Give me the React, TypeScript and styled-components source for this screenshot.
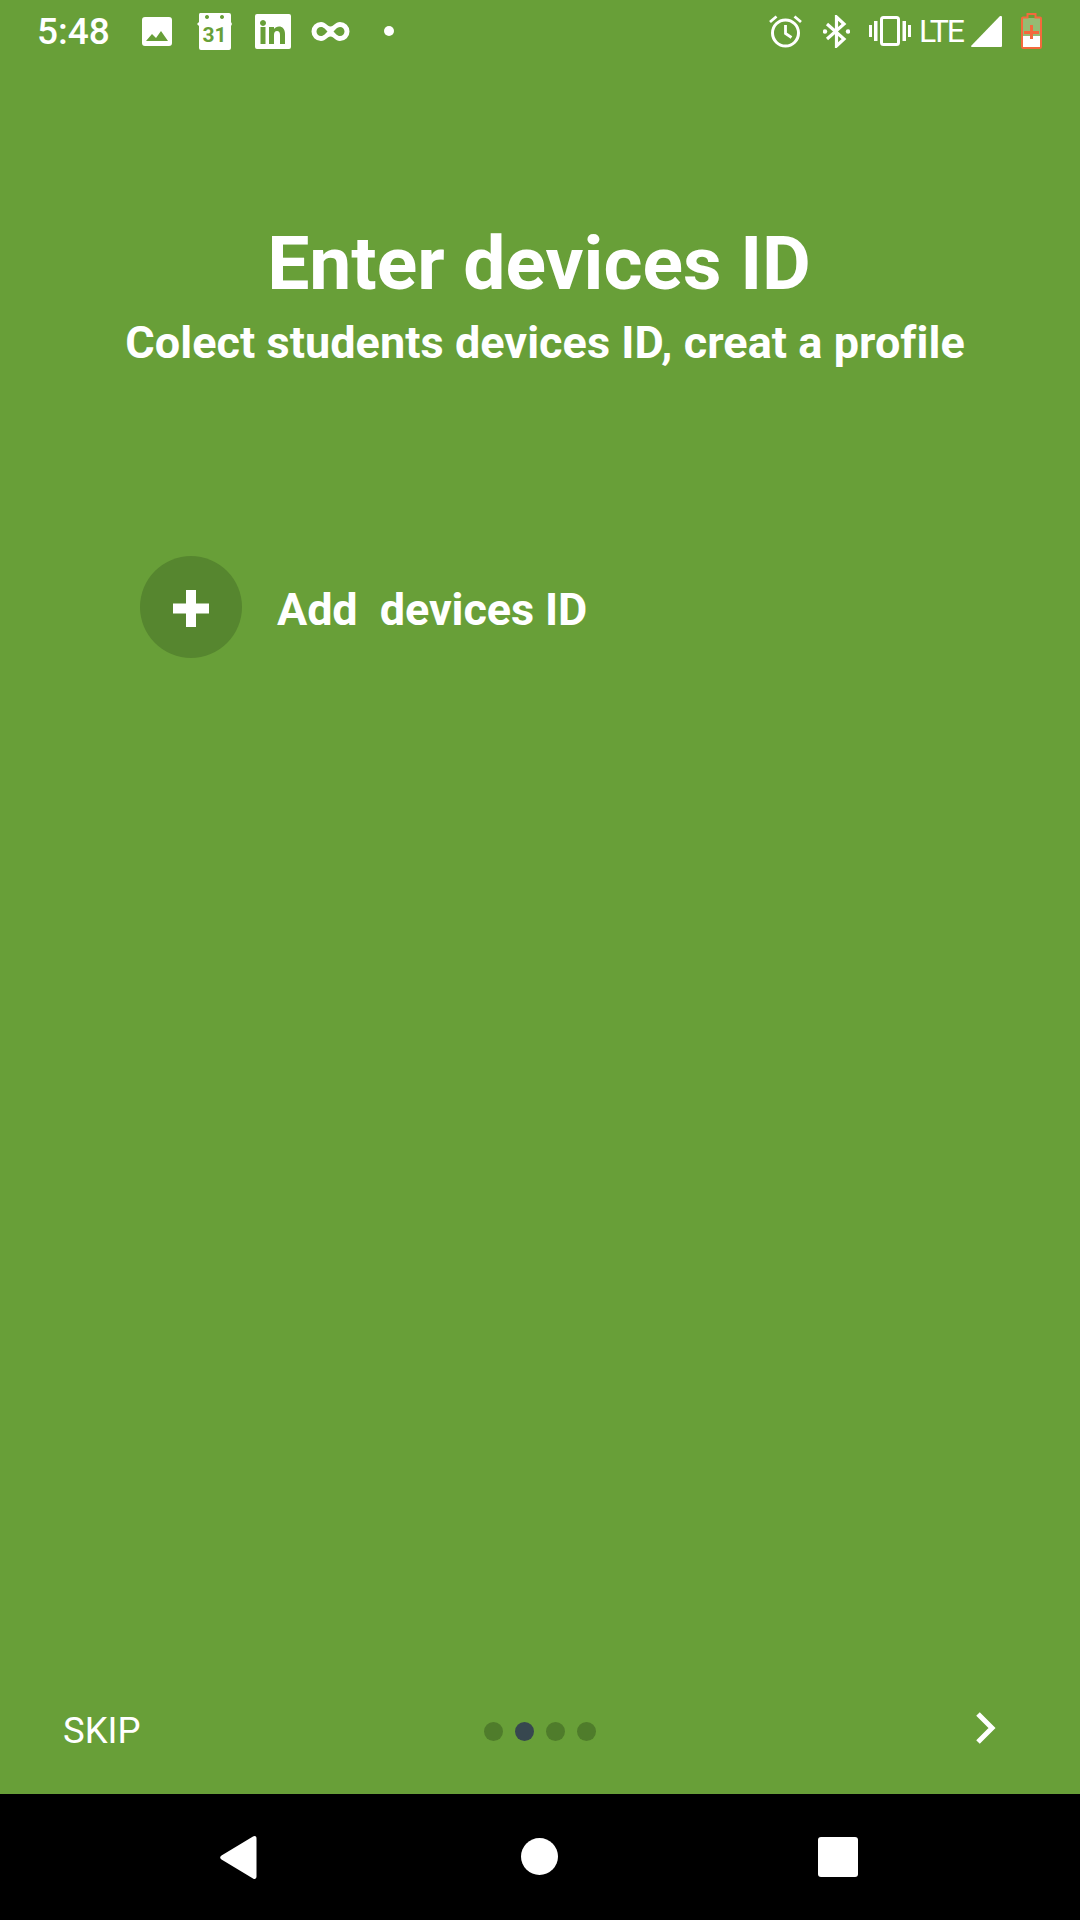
import React from "react";
import styled, { createGlobalStyle } from "styled-components";

const GlobalStyle = createGlobalStyle`
  html, body {
    margin: 0;
    padding: 0;
    background: #000;
  }
`;

const Screen = styled.div`
  width: 1080px;
  height: 1920px;
  display: flex;
  flex-direction: column;
  overflow: hidden;
  background: #689f38;
  color: #fff;
  font-family: Roboto, "Liberation Sans", sans-serif;
`;

const StatusBar = styled.div`
  height: 63px;
  flex: none;
  display: flex;
  align-items: flex-start;
`;

const Clock = styled.div`
  margin: 12px 0 0 37px;
  width: 71px;
  font-size: 37px;
  line-height: 40px;
  font-weight: 500;
  white-space: nowrap;
`;

const Icon = styled.svg<{ $left: number; $top: number }>`
  display: block;
  flex: none;
  margin-left: ${(props) => props.$left}px;
  margin-top: ${(props) => props.$top}px;
`;

const Spacer = styled.div`
  flex: 1;
`;

const Lte = styled.div`
  margin: 14px 0 0 8px;
  width: 44px;
  font-size: 32px;
  line-height: 34px;
  letter-spacing: -2.2px;
`;

const Content = styled.div`
  flex: 1;
  display: flex;
  flex-direction: column;
`;

const Title = styled.h1`
  margin: 158px 0 0;
  text-align: center;
  font-size: 75px;
  line-height: 84px;
  font-weight: 700;
  transform: translateX(-1px);
`;

const Subtitle = styled.p`
  margin: 0;
  padding-top: 13px;
  text-align: center;
  font-size: 45px;
  line-height: 50px;
  font-weight: 700;
  letter-spacing: 0.05px;
  transform: translateX(5px);
`;

const AddRow = styled.div`
  margin: 188px 0 0 140px;
  display: flex;
  align-items: center;
  gap: 35px;
`;

const AddCircle = styled.div`
  width: 102px;
  height: 102px;
  box-sizing: border-box;
  padding-top: 2px;
  border-radius: 50%;
  background: #56862f;
  display: flex;
  align-items: center;
  justify-content: center;
`;

const AddLabel = styled.div`
  padding-top: 6px;
  font-size: 45px;
  line-height: 50px;
  font-weight: 700;
  letter-spacing: -0.1px;
  white-space: pre;
`;

const Footer = styled.div`
  margin-top: auto;
  height: 126px;
  flex: none;
  position: relative;
  display: flex;
  align-items: flex-start;
`;

const Skip = styled.div`
  margin: 42px 0 0 63px;
  font-size: 36.5px;
  line-height: 42px;
`;

const Dots = styled.div`
  position: absolute;
  left: 484px;
  top: 54px;
  display: flex;
  gap: 12px;
`;

const Dot = styled.div<{ $active?: boolean }>`
  width: 19px;
  height: 19px;
  border-radius: 50%;
  background: ${(props) => (props.$active ? "#37474f" : "#4f7c2b")};
`;

const NextIcon = styled.svg`
  position: absolute;
  left: 971px;
  top: 43px;
`;

const NavBar = styled.div`
  height: 126px;
  flex: none;
  background: #000;
  position: relative;
`;

const NavIcon = styled.svg<{ $left: number; $top: number }>`
  position: absolute;
  left: ${(props) => props.$left}px;
  top: ${(props) => props.$top}px;
`;

export default function App() {
  return (
    <Screen>
      <GlobalStyle />
      <StatusBar>
        <Clock>5:48</Clock>
        {/* gallery */}
        <Icon $left={34} $top={17} width="30" height="29" viewBox="0 0 30 29">
          <path
            fill="#fff"
            fillRule="evenodd"
            d="M3 0h24a3 3 0 0 1 3 3v23a3 3 0 0 1-3 3H3a3 3 0 0 1-3-3V3a3 3 0 0 1 3-3zM4 24h22l-7-10-5 7-4-4z"
          />
        </Icon>
        {/* calendar */}
        <Icon $left={25} $top={13} width="35" height="37" viewBox="0 0 35 37">
          <path
            fill="#fff"
            fillRule="evenodd"
            d="M3 0h29a2 2 0 0 1 2 2v7l1 2-1 2v22a2 2 0 0 1-2 2H4a2 2 0 0 1-2-2V13L0 11l2-2V2a2 2 0 0 1 1-2zM10 2a2 2 0 1 0 .01 0zM25 2a2 2 0 1 0 .01 0z"
          />
          <text
            x="17.500"
            y="29"
            textAnchor="middle"
            fontFamily="Roboto, sans-serif"
            fontWeight="700"
            fontSize="21"
            fill="#689f38"
          >
            31
          </text>
        </Icon>
        {/* linkedin */}
        <Icon $left={23} $top={14} width="36" height="35" viewBox="0 0 36 35">
          <path
            fill="#fff"
            fillRule="evenodd"
            d="M2 0h32a2 2 0 0 1 2 2v31a2 2 0 0 1-2 2H2a2 2 0 0 1-2-2V2a2 2 0 0 1 2-2zM8 6a3 3 0 1 0 .01 0zM5.500 13v17h5V13zM14 13v17h5v-9c0-2.500 1-4 3-4s3 1.500 3 4v9h5V20c0-5-2.500-7.500-6-7.500-2 0-4 1-5 2.500v-2z"
          />
        </Icon>
        {/* infinity */}
        <Icon $left={20} $top={22} width="39" height="19" viewBox="0 0 39 19">
          <path
            fill="#fff"
            fillRule="evenodd"
            d="M10 0C15 0 16 4.500 19.500 4.500S24 0 29 0a9.500 9.500 0 0 1 0 19C24 19 23 14.500 19.500 14.500S15 19 10 19a9.500 9.500 0 0 1 0-19zM10 5C7.500 5 5.500 7 5.500 9.500S7.500 14 10 14c3 0 4.500-2.500 6.500-4.500C14.500 7.500 13 5 10 5zM29 5c2.500 0 4.500 2 4.500 4.500S31.500 14 29 14c-3 0-4.500-2.500-6.500-4.500C24.500 7.500 26 5 29 5z"
          />
        </Icon>
        <Icon $left={34} $top={26} width="10" height="10" viewBox="0 0 10 10">
          <circle cx="5" cy="5" r="5" fill="#fff" />
        </Icon>
        <Spacer />
        {/* alarm */}
        <Icon $left={0} $top={15} width="33" height="33" viewBox="0 0 33 33" fill="none" stroke="#fff">
          <circle cx="16.500" cy="18" r="13" strokeWidth="3" />
          <path strokeWidth="2.800" d="M16.500 10v8.500l6 4M1 7l6.500-5.500M32 7l-6.500-5.500" />
        </Icon>
        {/* bluetooth */}
        <Icon $left={21} $top={15} width="27" height="33" viewBox="0 0 27 33">
          <path fill="none" stroke="#fff" strokeWidth="3.200" d="M4 9l17 15-7.500 7V2L21 9 4 24" />
          <circle cx="2" cy="16.500" r="2.200" fill="#fff" />
          <circle cx="25" cy="16.500" r="2.200" fill="#fff" />
        </Icon>
        {/* vibrate */}
        <Icon $left={19} $top={16} width="42" height="30" viewBox="0 0 42 30">
          <rect x="12.500" y="1.500" width="17" height="27" rx="2" fill="none" stroke="#fff" strokeWidth="3" />
          <path fill="#fff" d="M0 9h3v12H0zM5 5h3.500v20H5zM33.500 5H37v20h-3.500zM39 9h3v12h-3z" />
        </Icon>
        <Lte>LTE</Lte>
        {/* signal */}
        <Icon $left={8} $top={16} width="31" height="31" viewBox="0 0 31 31">
          <path fill="#fff" d="M29 0h1a1 1 0 0 1 1 1v29a1 1 0 0 1-1 1H1a1 1 0 0 1-1-1z" />
        </Icon>
        {/* battery */}
        <Icon $left={19} $top={13} width="21" height="36" viewBox="0 0 21 36">
          <path fill="#fff" fillOpacity="0.3" d="M1 5h19v18H1z" />
          <path fill="#fff" d="M1 23h19v12H1z" />
          <path
            fill="none"
            stroke="#f4693c"
            strokeWidth="2"
            d="M6.500 4.500V1h8v3.500H19a1 1 0 0 1 1 1V34a1 1 0 0 1-1 1H2a1 1 0 0 1-1-1V5.500a1 1 0 0 1 1-1z"
          />
          <path fill="#f4693c" d="M9 12h3v6h6v3h-6v5H9v-5H3v-3h6z" />
        </Icon>
        <Icon $left={38} $top={0} width="0" height="0" />
      </StatusBar>
      <Content>
        <Title>Enter devices ID</Title>
        <Subtitle>Colect students devices ID, creat a profile</Subtitle>
        <AddRow>
          <AddCircle>
            <svg width="36" height="37" viewBox="0 0 36 37">
              <path fill="#fff" d="M13 0h10v13.500h13v10H23V37H13V23.500H0v-10h13z" />
            </svg>
          </AddCircle>
          <AddLabel>Add  devices ID</AddLabel>
        </AddRow>
        <Footer>
          <Skip>SKIP</Skip>
          <Dots>
            <Dot />
            <Dot $active />
            <Dot />
            <Dot />
          </Dots>
          <NextIcon width="28" height="34" viewBox="0 0 28 34">
            <path fill="none" stroke="#fff" strokeWidth="5" d="M7 3l14 14L7 31" />
          </NextIcon>
        </Footer>
      </Content>
      <NavBar>
        <NavIcon $left={220} $top={42} width="37" height="43" viewBox="0 0 37 43">
          <path
            fill="#fff"
            d="M33 .6c1.800-1.200 3.500-.3 3.500 1.800v38.200c0 2.100-1.700 3-3.500 1.800L1.500 23.500c-1.800-1.200-1.800-2.800 0-4z"
          />
        </NavIcon>
        <NavIcon $left={521} $top={44} width="37" height="37" viewBox="0 0 37 37">
          <circle cx="18.500" cy="18.500" r="18.500" fill="#fff" />
        </NavIcon>
        <NavIcon $left={818} $top={43} width="40" height="40" viewBox="0 0 40 40">
          <rect width="40" height="40" rx="3" fill="#fff" />
        </NavIcon>
      </NavBar>
    </Screen>
  );
}
